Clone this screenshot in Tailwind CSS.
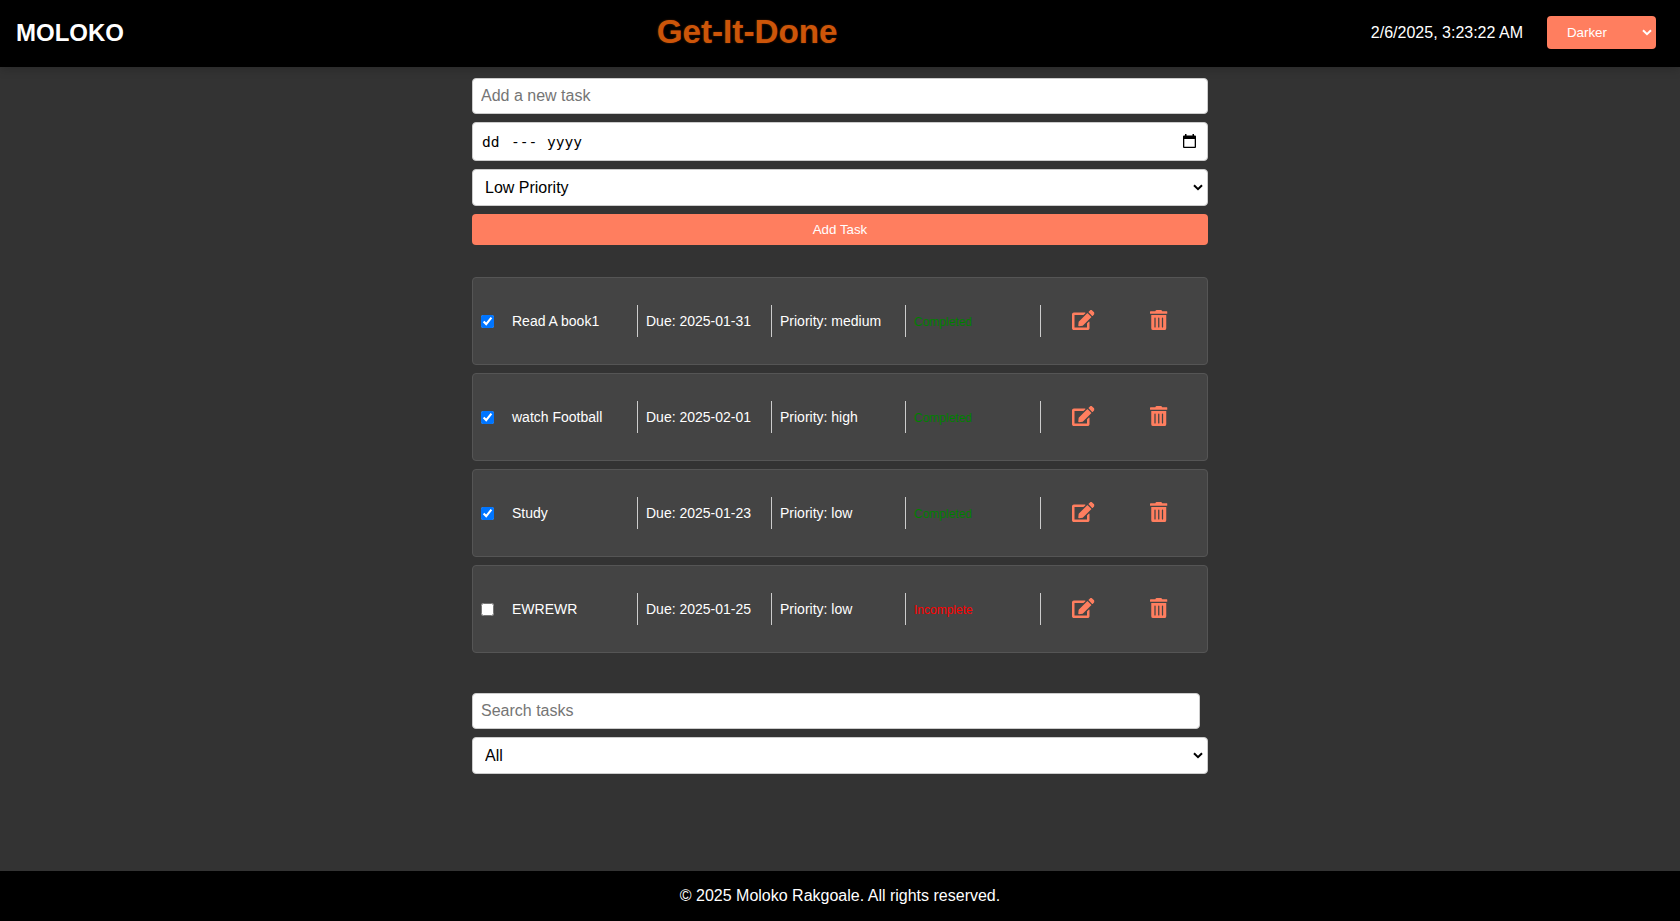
<!DOCTYPE html>
<html lang="en">
<head>
<meta charset="utf-8">
<title>Get-It-Done</title>
<script src="https://cdn.jsdelivr.net/npm/@tailwindcss/browser@4"></script>
</head>
<body class="flex h-screen flex-col overflow-hidden bg-[#333] font-['Liberation_Sans',Arial,sans-serif] text-base text-white">
<svg class="hidden">
  <symbol id="edit" viewBox="0 0 576 512"><path d="M402.6 83.2l90.2 90.2c3.800 3.800 3.800 10 0 13.800L274.400 405.600l-92.800 10.300c-12.400 1.400-22.900-9.100-21.500-21.500l10.300-92.800L388.800 83.200c3.800-3.800 10-3.800 13.800 0zm162-22.900l-48.800-48.800c-15.200-15.200-39.900-15.200-55.200 0l-35.400 35.400c-3.800 3.800-3.800 10 0 13.800l90.200 90.200c3.800 3.800 10 3.800 13.800 0l35.400-35.400c15.200-15.300 15.200-40 0-55.200zM384 346.200V448H64V128h229.800c3.200 0 6.200-1.300 8.500-3.500l40-40c7.600-7.600 2.200-20.500-8.500-20.500H48C21.500 64 0 85.500 0 112v352c0 26.500 21.500 48 48 48h352c26.500 0 48-21.500 48-48V306.200c0-10.700-12.900-16-20.500-8.500l-40 40c-2.200 2.300-3.500 5.300-3.500 8.500z"/></symbol>
  <symbol id="trash" viewBox="0 0 448 512"><path d="M32 464a48 48 0 0 0 48 48h288a48 48 0 0 0 48-48V128H32zm272-256a16 16 0 0 1 32 0v224a16 16 0 0 1-32 0zm-96 0a16 16 0 0 1 32 0v224a16 16 0 0 1-32 0zm-96 0a16 16 0 0 1 32 0v224a16 16 0 0 1-32 0zM432 32H312l-9.400-18.700A24 24 0 0 0 281.100 0H166.800a23.720 23.720 0 0 0-21.400 13.300L136 32H16A16 16 0 0 0 0 48v32a16 16 0 0 0 16 16h416a16 16 0 0 0 16-16V48a16 16 0 0 0-16-16z"/></symbol>
  <symbol id="chevron" viewBox="0 0 10 7"><path d="M1 1.200L5 5.200L9 1.200" fill="none" stroke="currentColor" stroke-width="2"/></symbol>
</svg>

<header class="flex h-[67px] shrink-0 items-start justify-between bg-black pr-6 pl-4 shadow-[0_2px_10px_rgba(0,0,0,0.2)]">
  <div class="pt-[19px] text-2xl leading-7 font-bold">MOLOKO</div>
  <h1 class="mt-[14px] scale-[1.038] text-[32px] leading-9 font-bold text-[#cc5509] [text-shadow:0_0_2px_rgba(204,85,9,0.4)]">Get-It-Done</h1>
  <div class="flex items-start justify-end gap-6 pt-4">
    <div class="pt-2 leading-[18px]">2/6/2025, 3:23:22 AM</div>
    <div class="relative">
      <select class="block h-[33px] w-[109px] appearance-none rounded bg-[#ff7e5f] pl-5 text-[13.333px] text-white"><option>Darker</option></select>
      <svg class="pointer-events-none absolute top-[13px] right-1 h-[7px] w-[10px] text-white"><use href="#chevron"/></svg>
    </div>
  </div>
</header>

<main class="mx-auto flex w-[736px] grow flex-col pt-[11px]">
  <form class="flex flex-col gap-2">
    <input class="h-9 rounded border border-[#ccc] bg-white px-2 text-black placeholder:text-[#757575]" placeholder="Add a new task">
    <div class="flex h-[39px] items-center rounded border border-[#ccc] bg-white pr-[11px] pl-[9px] font-['DejaVu_Sans_Mono',monospace] text-[14.6px] text-black">
      <span class="w-[29px] pt-px">dd</span><span class="w-9 pt-px">---</span><span class="grow pt-px">yyyy</span>
      <svg class="h-[15px] w-[13px]" viewBox="0 0 13 15"><path fill-rule="evenodd" d="M2 0h1.500v1.500h6V0H11v1.500h1q1 0 1 1V13q0 1-1 1H1q-1 0-1-1V2.500q0-1 1-1h1zM1.300 5v7.700h10.400V5z"/></svg>
    </div>
    <div class="relative">
      <select class="block h-[37px] w-full appearance-none rounded border border-[#ccc] bg-white px-3 text-black"><option>Low Priority</option></select>
      <svg class="pointer-events-none absolute top-[15px] right-[5px] h-[7px] w-[10px] text-black"><use href="#chevron"/></svg>
    </div>
    <button type="button" class="h-[31px] rounded bg-[#ff7e5f] text-[13.333px]">Add Task</button>
  </form>

  <ul id="tasks" class="mt-8 flex flex-col gap-2 text-sm"></ul>

  <div class="mt-10 flex flex-col gap-2">
    <input class="mr-2 h-9 rounded border border-[#ccc] bg-white px-2 text-black placeholder:text-[#757575]" placeholder="Search tasks">
    <div class="relative">
      <select class="block h-[37px] w-full appearance-none rounded border border-[#ccc] bg-white px-3 text-black"><option>All</option></select>
      <svg class="pointer-events-none absolute top-[15px] right-[5px] h-[7px] w-[10px] text-black"><use href="#chevron"/></svg>
    </div>
  </div>
</main>

<footer class="flex h-[50px] shrink-0 items-center justify-center bg-black">© 2025 Moloko Rakgoale. All rights reserved.</footer>

<template id="row">
  <li class="flex h-[88px] items-center rounded border border-[#555] bg-[#444] pl-2">
    <input type="checkbox" class="mt-px mr-[10px] size-[13px]">
    <span data-f="name" class="h-8 w-[134px] border-r border-[#ccc] pl-2 leading-8"></span>
    <span data-f="due" class="h-8 w-[134px] border-r border-[#ccc] pl-2 leading-8"></span>
    <span data-f="priority" class="h-8 w-[134px] border-r border-[#ccc] pl-2 leading-8"></span>
    <span data-f="status" class="h-8 w-[135px] border-r border-[#ccc] pl-2 text-xs leading-[34px]"></span>
    <button class="ml-[31px] pb-[2px] text-[#ff7e5f]"><svg class="h-5 w-[22.5px] fill-current"><use href="#edit"/></svg></button>
    <button class="ml-[55.500px] pb-[2px] text-[#ff7e5f]"><svg class="h-5 w-[17.5px] fill-current"><use href="#trash"/></svg></button>
  </li>
</template>
<script>
  const tasks = [
    ['Read A book1', '2025-01-31', 'medium', true],
    ['watch Football', '2025-02-01', 'high', true],
    ['Study', '2025-01-23', 'low', true],
    ['EWREWR', '2025-01-25', 'low', false],
  ];
  for (const [name, due, priority, done] of tasks) {
    const row = document.getElementById('row').content.cloneNode(true);
    const f = k => row.querySelector(`[data-f=${k}]`);
    row.querySelector('input').checked = done;
    f('name').textContent = name;
    f('due').textContent = 'Due: ' + due;
    f('priority').textContent = 'Priority: ' + priority;
    f('status').textContent = done ? 'Completed' : 'Incomplete';
    f('status').classList.add(done ? 'text-[#008000]' : 'text-[#ff0000]');
    document.getElementById('tasks').append(row);
  }
</script>
</body>
</html>
